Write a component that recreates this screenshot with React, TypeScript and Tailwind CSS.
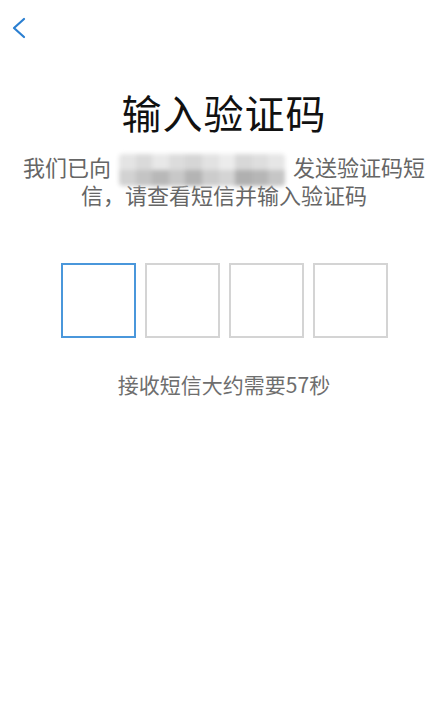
import React from 'react';

const mosaicTop = ['#e4e4e4', '#dadada', '#e8e8e8', '#dcdcdc', '#d6d6d6', '#e2e2e2', '#ececec', '#d8d8d8', '#dedede', '#e6e6e6'];
const mosaicBottom = ['#d2d2d2', '#c4c4c4', '#b8b8b8', '#c8c8c8', '#b4b4b4', '#cccccc', '#d4d4d4', '#b0b0b0', '#b6b6b6', '#c6c6c6'];

const BlurredPhone: React.FC = () => (
  <span className="inline-flex flex-col w-[166px] h-[32px] mx-2 align-middle -my-[5px] blur-[2px] overflow-hidden rounded-sm">
    <span className="flex flex-1">
      {mosaicTop.map((c, i) => (
        <span key={i} className="flex-1" style={{ backgroundColor: c }} />
      ))}
    </span>
    <span className="flex flex-1">
      {mosaicBottom.map((c, i) => (
        <span key={i} className="flex-1" style={{ backgroundColor: c }} />
      ))}
    </span>
  </span>
);

const App: React.FC = () => {
  const codeLength = 4;
  const seconds = 57;

  return (
    <div
      className="w-[448px] h-[720px] bg-white flex flex-col items-center"
      style={{ fontFamily: '"Noto Sans CJK SC", "Noto Sans", sans-serif' }}
    >
      {/* Header */}
      <div className="w-full h-14 flex items-center pl-[11px]">
        <svg width="16" height="24" viewBox="0 0 16 24" fill="none">
          <path d="M13 3 L3 12 L13 21" stroke="#2a7fd1" strokeWidth="2.2" strokeLinecap="round" strokeLinejoin="round" />
        </svg>
      </div>

      <h1 className="mt-[36px] text-[40px] leading-[40px] text-[#111111] font-normal tracking-[1px]">输入验证码</h1>

      <p className="mt-[21px] text-[22px] leading-[26px] text-[#666666] text-center">
        <span className="whitespace-nowrap">
          我们已向
          <BlurredPhone />
          发送验证码短
        </span>
        <br />
        信，请查看短信并输入验证码
      </p>

      {/* Code inputs */}
      <div className="mt-[56px] flex gap-[9px]">
        <div className="w-[75px] h-[75px] border-2 border-[#4a97db]" />
        {Array.from({ length: codeLength - 1 }).map((_, i) => (
          <div key={i} className="w-[75px] h-[75px] border-2 border-[#d4d4d4]" />
        ))}
      </div>

      <p className="mt-[34px] text-[21px] leading-[24px] text-[#6e6e6e]">接收短信大约需要{seconds}秒</p>
    </div>
  );
};

export default App;
